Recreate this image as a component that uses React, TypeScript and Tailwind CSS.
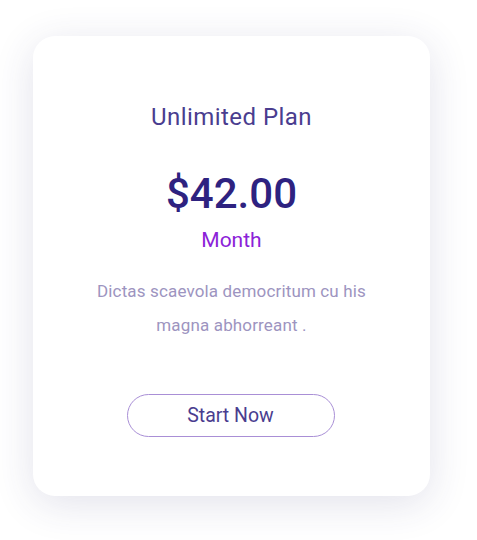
export default function App() {
  return (
    <div className="w-[477px] h-[540px] bg-white pt-[36px] pl-[33px]" style={{ fontFamily: "Roboto, sans-serif" }}>
      <div className="w-[397px] h-[460px] bg-white rounded-[22px] shadow-[0_8px_40px_rgba(50,50,110,0.14)] flex flex-col items-center pt-[66px]">
        <h2 className="text-[24px] leading-[30px] text-[#4a3d8f] tracking-[0.45px]">Unlimited Plan</h2>
        <div className="mt-[38px] text-[42px] leading-[48px] font-medium text-[#2e2280]">$42.00</div>
        <div className="mt-[9px] text-[21px] leading-[26px] text-[#8b22d8]">Month</div>
        <p className="mt-[21px] w-[300px] text-center text-[17px] leading-[34px] tracking-[0.15px] text-[#9d94c0]">
          Dictas scaevola democritum cu his magna abhorreant .
        </p>
        <button className="mt-[52px] -ml-[2px] w-[208px] h-[43px] rounded-full border border-[#a98fd6] text-[19.5px] text-[#4a3d8f] flex items-center justify-center">
          Start Now
        </button>
      </div>
    </div>
  );
}
